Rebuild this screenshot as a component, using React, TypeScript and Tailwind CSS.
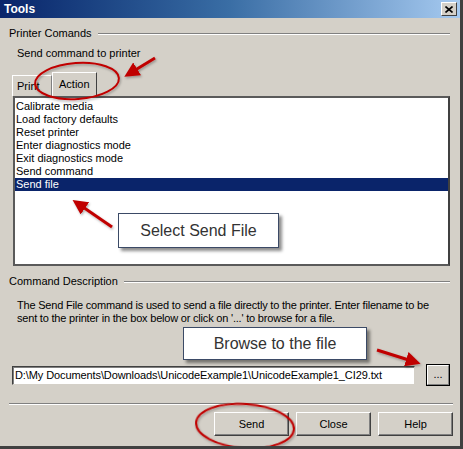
import React from 'react'

const actions = [
  'Calibrate media',
  'Load factory defaults',
  'Reset printer',
  'Enter diagnostics mode',
  'Exit diagnostics mode',
  'Send command',
  'Send file',
]

function GroupHeader({ label }: { label: string }) {
  return (
    <div className="flex items-center gap-[6px] pr-[10px]">
      <span className="whitespace-nowrap">{label}</span>
      <div className="flex-1 h-[2px] border-t border-[#808080] border-b border-b-white" />
    </div>
  )
}

function WinButton({ children, className = '' }: { children: React.ReactNode; className?: string }) {
  return (
    <div
      className={`h-[24px] flex items-center justify-center bg-[#d4d0c8] border border-t-white border-l-white border-r-[#404040] border-b-[#404040] shadow-[inset_-1px_-1px_0_#808080] ${className}`}
    >
      {children}
    </div>
  )
}

function Annotations() {
  return (
    <svg className="absolute inset-0 pointer-events-none" width="463" height="449" viewBox="0 0 463 449">
      <defs>
        <marker id="head" markerWidth="5" markerHeight="5" refX="2" refY="2.5" orient="auto">
          <path d="M0,0 L5,2.5 L0,5 Z" fill="#c00000" />
        </marker>
        <filter id="soft" x="-20%" y="-20%" width="140%" height="140%">
          <feDropShadow dx="1" dy="1.5" stdDeviation="1" floodColor="#000" floodOpacity="0.3" />
        </filter>
      </defs>
      <g filter="url(#soft)" stroke="#c00000" fill="none" strokeWidth="2">
        <ellipse cx="77" cy="81" rx="42" ry="18" transform="rotate(-4 77 81)" />
        <ellipse cx="245" cy="426" rx="49" ry="22" transform="rotate(4 245 426)" />
        <line x1="155" y1="58" x2="132" y2="72" strokeWidth="3" markerEnd="url(#head)" />
        <line x1="112" y1="227" x2="80" y2="205" strokeWidth="3" markerEnd="url(#head)" />
        <line x1="377" y1="350" x2="412" y2="361" strokeWidth="3" markerEnd="url(#head)" />
      </g>
    </svg>
  )
}

export default function App() {
  return (
    <div
      className="relative w-[463px] h-[449px] overflow-hidden bg-[#d4d0c8] border-r-[3px] border-b-[3px] border-[#404040] text-[11px] leading-[13px] text-black"
      style={{ fontFamily: '"Liberation Sans", Arial, sans-serif' }}
    >
      {/* title bar */}
      <div className="h-[18px] flex items-center justify-between pl-[4px] pr-[3px] bg-gradient-to-r from-[#0a246a] via-[#3a6ea5] to-[#a6caf0]">
        <span className="text-white font-bold text-[12px]">Tools</span>
        <div className="w-[16px] h-[14px] bg-[#d4d0c8] border border-t-white border-l-white border-r-[#404040] border-b-[#404040] flex items-center justify-center">
          <svg width="8" height="7" viewBox="0 0 8 7">
            <path d="M0.5 0.5 L7.5 6.5 M7.5 0.5 L0.5 6.5" stroke="#000" strokeWidth="1.6" />
          </svg>
        </div>
      </div>

      <div className="pl-[9px] pt-[9px]">
        <GroupHeader label="Printer Comands" />
        <div className="pl-[8px] mt-[7px]">Send command to printer</div>

        {/* tabs */}
        <div className="flex items-end pl-[3px] mt-[12px] h-[24px]">
          <div className="w-[40px] h-[21px] pl-[4px] pt-[4px] border-t border-l border-white border-r border-r-[#808080]">Print</div>
          <div className="w-[45px] h-[24px] pl-[6px] pt-[5px] border-t border-l border-white border-r border-r-[#404040] bg-[#d4d0c8]">Action</div>
        </div>

        {/* list */}
        <div className="ml-[4px] mr-[10px] h-[170px] bg-white border-2 border-[#5a5a5a] border-r-[#404040] pt-[2px]">
          {actions.map((a, i) => (
            <div
              key={a}
              className={`h-[13px] pl-[1px] ${i === actions.length - 1 ? 'bg-[#0a246a] text-white' : ''}`}
            >
              {a}
            </div>
          ))}
        </div>

        <div className="mt-[9px]">
          <GroupHeader label="Command Description" />
        </div>
        <div className="pl-[8px] mt-[11px] tracking-[-0.2px]">
          <div>The Send File command is used to send a file directly to the printer. Enter filename to be</div>
          <div>sent to the printer in the box below or click on '...' to browse for a file.</div>
        </div>

        <div className="flex items-center mt-[39px] pl-[3px] gap-[11px]">
          <div className="w-[403px] h-[19px] bg-white border border-t-[#404040] border-l-[#404040] border-r-[#d4d0c8] border-b-[#d4d0c8] shadow-[inset_1px_1px_0_#808080] pl-[2px] flex items-center tracking-[-0.1px]">
            D:\My Documents\Downloads\UnicodeExample1\UnicodeExample1_CI29.txt
          </div>
          <div className="w-[24px] h-[22px] border border-black flex items-center justify-center">
            <div className="w-full h-full flex items-center justify-center bg-[#d4d0c8] border border-t-white border-l-white border-r-[#808080] border-b-[#808080] pb-[2px]">...</div>
          </div>
        </div>

        <div className="mt-[17px] mr-[7px] h-[2px] border-t border-[#808080] border-b border-b-white" />

        <div className="flex justify-end gap-[7px] mt-[7px] pr-[7px]">
          <WinButton className="w-[75px]">Send</WinButton>
          <WinButton className="w-[75px]">Close</WinButton>
          <WinButton className="w-[75px]">Help</WinButton>
        </div>
      </div>

      {/* callouts */}
      <div className="absolute left-[118px] top-[213px] w-[161px] h-[35px] bg-white border border-[#3b4a66] shadow-[3px_3px_3px_rgba(0,0,0,0.45)] flex items-center justify-center text-[16px] text-[#333]">
        Select Send File
      </div>
      <div className="absolute left-[183px] top-[327px] w-[184px] h-[33px] bg-white border border-[#3b4a66] shadow-[3px_3px_3px_rgba(0,0,0,0.45)] flex items-center justify-center text-[16px] text-[#333]">
        Browse to the file
      </div>

      <Annotations />
    </div>
  )
}
